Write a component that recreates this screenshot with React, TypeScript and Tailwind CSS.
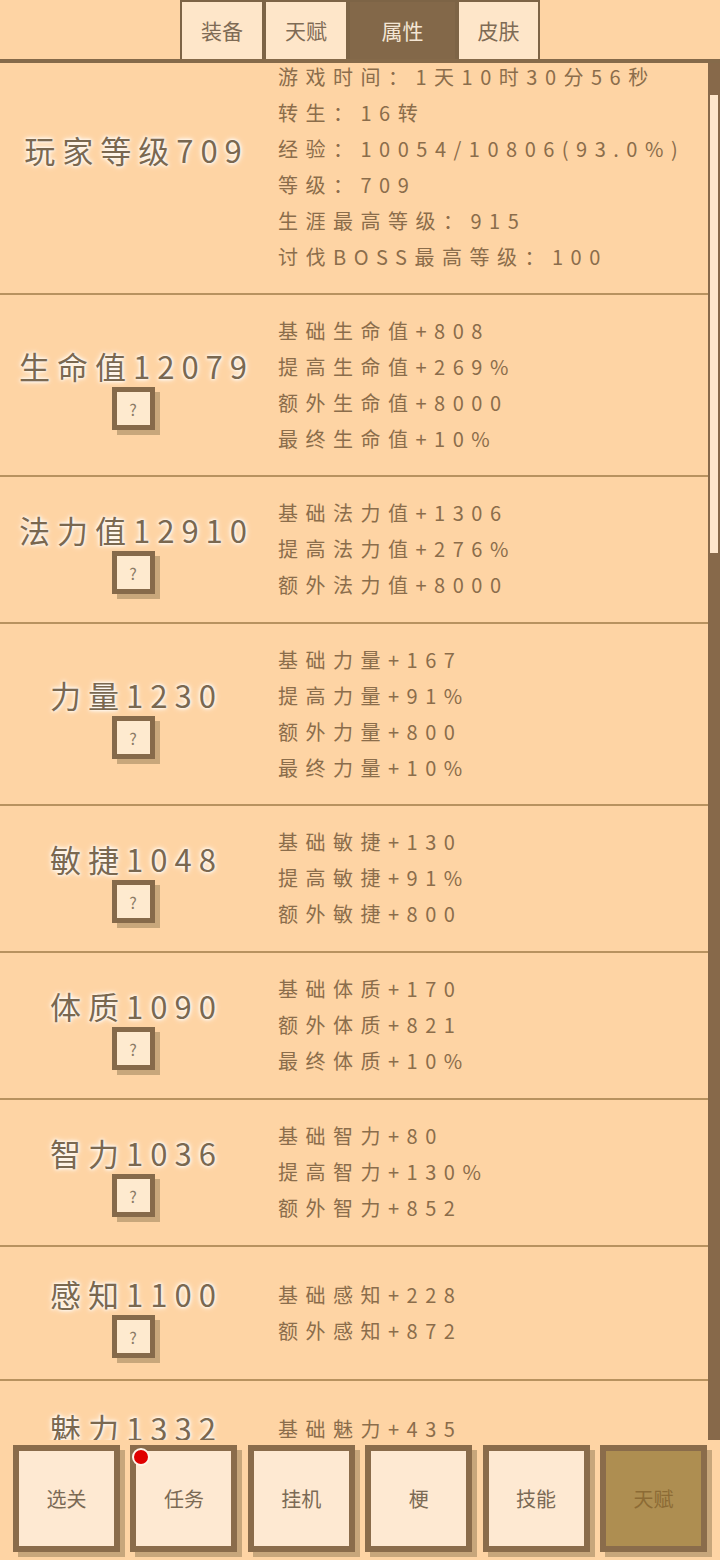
import React from "react";

type Stat = {
  title: string;
  lines: string[];
  help?: boolean;
};

const stats: Stat[] = [
  {
    title: "玩家等级709",
    lines: [
      "游戏时间：1天10时30分56秒",
      "转生：16转",
      "经验：10054/10806(93.0%)",
      "等级：709",
      "生涯最高等级：915",
      "讨伐BOSS最高等级：100",
    ],
  },
  {
    title: "生命值12079",
    help: true,
    lines: ["基础生命值+808", "提高生命值+269%", "额外生命值+8000", "最终生命值+10%"],
  },
  {
    title: "法力值12910",
    help: true,
    lines: ["基础法力值+1306", "提高法力值+276%", "额外法力值+8000"],
  },
  {
    title: "力量1230",
    help: true,
    lines: ["基础力量+167", "提高力量+91%", "额外力量+800", "最终力量+10%"],
  },
  {
    title: "敏捷1048",
    help: true,
    lines: ["基础敏捷+130", "提高敏捷+91%", "额外敏捷+800"],
  },
  {
    title: "体质1090",
    help: true,
    lines: ["基础体质+170", "额外体质+821", "最终体质+10%"],
  },
  {
    title: "智力1036",
    help: true,
    lines: ["基础智力+80", "提高智力+130%", "额外智力+852"],
  },
  {
    title: "感知1100",
    help: true,
    lines: ["基础感知+228", "额外感知+872"],
  },
  {
    title: "魅力1332",
    help: true,
    lines: ["基础魅力+435", "额外魅力+800"],
  },
];

const tabs = [
  { label: "装备", w: "w-[84px]" },
  { label: "天赋", w: "w-[84px]" },
  { label: "属性", w: "w-[109px]", active: true },
  { label: "皮肤", w: "w-[83px]" },
];

const navItems = ["选关", "任务", "挂机", "梗", "技能", "天赋"];

function StatRow({ stat, first }: { stat: Stat; first?: boolean }) {
  // three-line rows come out one pixel taller in the game
  const pad = stat.lines.length === 3 ? "pt-[18px] pb-[19px]" : "py-[18px]";
  return (
    <div className={`flex items-center border-b-2 border-[#b8925f] ${pad}`}>
      <div
        className={
          first
            ? "w-[266px] self-start pt-[71px] flex flex-col items-center"
            : "w-[266px] flex flex-col items-center pt-[9px] pb-[3px]"
        }
      >
        <div className="text-[31px] leading-[40px] tracking-[7px] pl-[7px] text-[#7a6850] [text-shadow:0_0_3px_#fff,0_0_4px_#fff,0_0_6px_#fff8ee]">
          {stat.title}
        </div>
        {stat.help && (
          <div className="mt-[1px] w-[43px] h-[43px] border-[5px] border-[#866a4a] bg-[#feeacf] shadow-[5px_5px_0_#c8a77b] flex items-center justify-center text-[16px] text-[#8a7a65]">
            ?
          </div>
        )}
      </div>
      <div className="pl-[12px] flex flex-col">
        {stat.lines.map((line) => (
          <div
            key={line}
            className="text-[20px] leading-[36px] tracking-[7.5px] text-[#8b6d4b] whitespace-nowrap"
          >
            {line}
          </div>
        ))}
      </div>
    </div>
  );
}

export default function App() {
  return (
    <div className="w-[720px] h-[1560px] flex flex-col bg-[#fed4a4] font-['Noto_Sans_CJK_SC','Noto_Sans',sans-serif] overflow-hidden">
      {/* top tabs */}
      <div className="h-[59px] flex justify-center">
        {tabs.map((t) => (
          <div
            key={t.label}
            className={`${t.w} h-full flex items-center justify-center text-[21px] border-x-2 border-t-2 border-[#7d6446] ${
              t.active ? "bg-[#836849] text-[#f4e6d4]" : "bg-[#fee6c9] text-[#7e6b55]"
            }`}
          >
            {t.label}
          </div>
        ))}
      </div>
      <div className="h-[4px] bg-[#856a4a]" />

      {/* stats list + scrollbar */}
      <div className="flex-1 flex min-h-0">
        <div className="flex-1 overflow-hidden">
          <div className="mt-[-22px]">
            {stats.map((s, i) => (
              <StatRow key={s.title} stat={s} first={i === 0} />
            ))}
          </div>
        </div>
        <div className="w-[12px] bg-[#87694a] pt-[32px]">
          <div className="ml-[2px] w-[8px] h-[458px] bg-[#fee6cb]" />
        </div>
      </div>

      {/* bottom nav */}
      <div className="h-[120px] bg-[#fed4a4] flex justify-between px-[13px] pt-[5px]">
        {navItems.map((n, i) => (
          <div
            key={n}
            className={`relative w-[107px] h-[107px] border-[6px] border-[#8a6c4b] shadow-[5px_5px_0_#c7a67b] flex items-center justify-center text-[20px] ${
              i === 5 ? "bg-[#ae8e51] text-[#8c6b35]" : "bg-[#fee9d2] text-[#7b6a55]"
            }`}
          >
            {n}
            {i === 1 && (
              <div className="absolute left-[-4px] top-[-3px] w-[18px] h-[18px] rounded-full bg-[#e00000] border-2 border-[#fff6ea]" />
            )}
          </div>
        ))}
      </div>
    </div>
  );
}
